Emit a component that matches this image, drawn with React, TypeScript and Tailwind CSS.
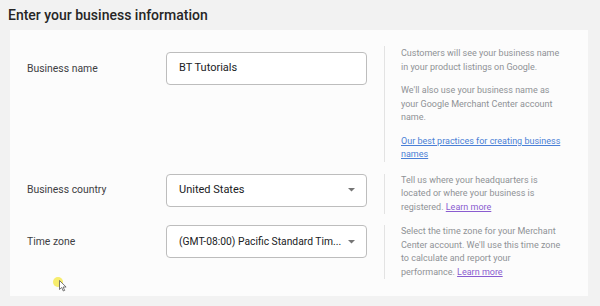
import React from "react"

const font = { fontFamily: "Roboto, 'Liberation Sans', sans-serif" }

function Caret() {
    return (
        <svg width="7" height="4" viewBox="0 0 7 4" className="shrink-0">
            <path d="M0 0h7L3.5 3.5z" fill="#757575" />
        </svg>
    )
}

interface RowProps {
    label: string
    children: React.ReactNode
    help: React.ReactNode
    inputOffset?: string
}

function Row({ label, children, help, inputOffset = "" }: RowProps) {
    return (
        <div className="flex items-start">
            <div className={`flex items-center ${inputOffset}`}>
                <div className="w-[139px] text-[10.4px] text-[#3c4043]">{label}</div>
                <div className="w-[201px] h-[33px] rounded-[4px] border border-[#bdbdbd] bg-white flex items-center pl-[12px] pr-[11px] text-[11px] text-[#202124] whitespace-nowrap">
                    {children}
                </div>
            </div>
            <div className="ml-[17px] border-l border-[#e3e3e3] pl-[16px] w-[182px] text-[9px] leading-[13.5px] text-[#8f9296]">
                {help}
            </div>
        </div>
    )
}

export default function App() {
    return (
        <div style={font} className="relative w-[600px] h-[306px] bg-[#f2f2f2] overflow-hidden">
            <h1 className="pl-[8px] pt-[5px] h-[30px] text-[14px] font-medium text-[#262626]">
                Enter your business information
            </h1>

            <div className="ml-[10px] w-[578px] h-[266px] bg-[#fcfcfc] pl-[17px] pt-[16px] flex flex-col">
                <Row
                    label="Business name"
                    inputOffset="mt-[6px]"
                    help={
                        <div className="flex flex-col gap-[10px] pt-[1px]">
                            <p>Customers will see your business name in your product listings on Google.</p>
                            <p>We'll also use your business name as your Google Merchant Center account name.</p>
                            <p>
                                <a className="underline text-[#4a7fd6]">Our best practices for creating business names</a>
                            </p>
                        </div>
                    }
                >
                    BT Tutorials
                </Row>

                <div className="mt-[12px]">
                    <Row
                        label="Business country"
                        help={
                            <p>
                                Tell us where your headquarters is located or where your business is registered.{" "}
                                <a className="underline text-[#8a5cd0]">Learn more</a>
                            </p>
                        }
                    >
                        <span className="flex-1">United States</span>
                        <Caret />
                    </Row>
                </div>

                <div className="mt-[11px]">
                    <Row
                        label="Time zone"
                        help={
                            <p>
                                Select the time zone for your Merchant Center account. We'll use this time zone to calculate and report your performance.{" "}
                                <a className="underline text-[#8a5cd0]">Learn more</a>
                            </p>
                        }
                    >
                        <span className="flex-1 text-[10.3px]">(GMT-08:00) Pacific Standard Tim...</span>
                        <Caret />
                    </Row>
                </div>
            </div>

            {/* cursor highlight from the recording */}
            <div className="absolute left-[53px] top-[277px] w-[10px] h-[10px] rounded-full bg-[#f5e84a]/80" />
            <svg className="absolute left-[59px] top-[280px]" width="8" height="12" viewBox="0 0 8 12">
                <path d="M0.5 0.5v9l2.2-2 1.6 3.5 1.4-.6-1.6-3.4h3z" fill="#fff" stroke="#555" strokeWidth="0.8" />
            </svg>
        </div>
    )
}
